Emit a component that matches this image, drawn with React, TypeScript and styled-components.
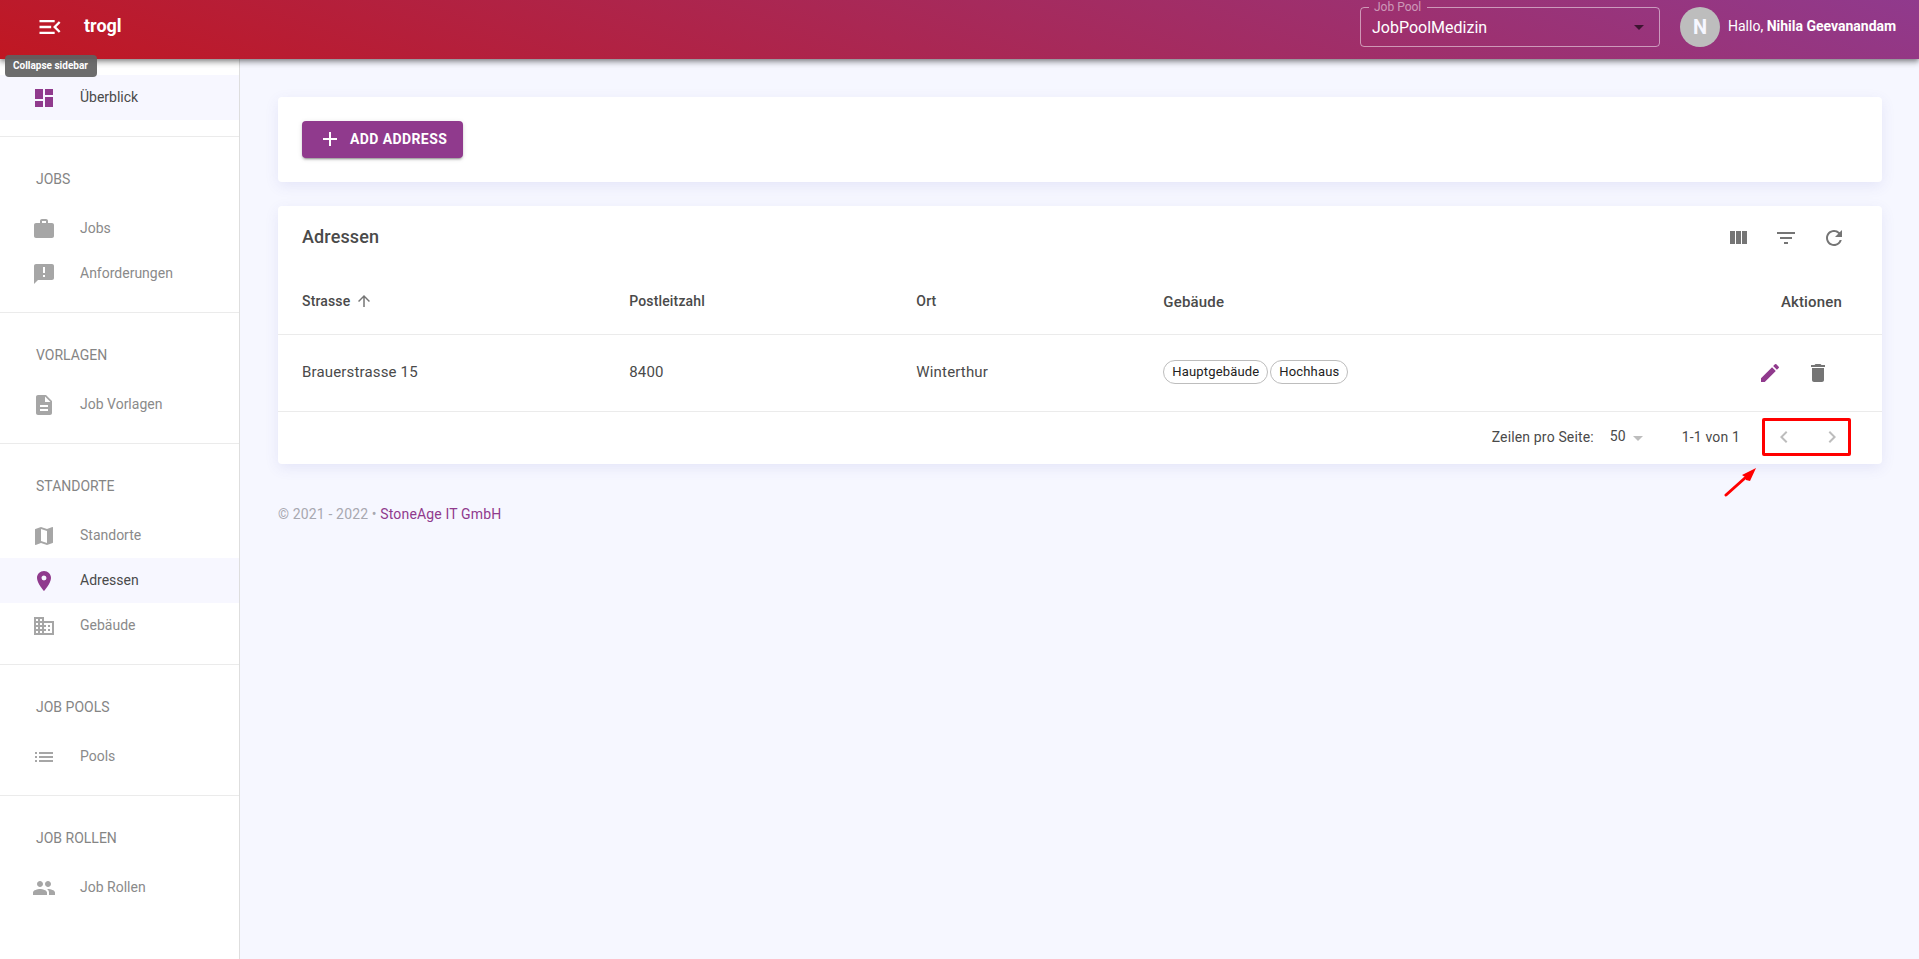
import React from "react";
import styled, { createGlobalStyle } from "styled-components";
import type { IconType } from "react-icons";
import {
  MdAdd,
  MdAnnouncement,
  MdArrowDropDown,
  MdArrowUpward,
  MdBusiness,
  MdChevronLeft,
  MdChevronRight,
  MdDashboard,
  MdDelete,
  MdDescription,
  MdEdit,
  MdFilterList,
  MdList,
  MdMap,
  MdMenuOpen,
  MdPeople,
  MdPlace,
  MdRefresh,
  MdWork,
} from "react-icons/md";

const purple = "#903a8d";
const line = "#ebebeb";
const ink = "#4a4a4a";

const GlobalStyle = createGlobalStyle`
  *, *::before, *::after { box-sizing: border-box; }
  body {
    margin: 0;
    background: #f6f7ff;
    color: ${ink};
    font-family: Roboto, "Liberation Sans", sans-serif;
    font-size: 14px;
    line-height: 20px;
  }
  button, select { font: inherit; }
  a { text-decoration: none; }
`;

const Page = styled.div`
  min-height: 100vh;
  display: flex;
  flex-direction: column;
`;

const Header = styled.header`
  position: relative;
  z-index: 2;
  height: 59px;
  padding: 0 19px 5px 36px;
  display: flex;
  align-items: center;
  color: #fff;
  background: linear-gradient(20deg, #c01722 0%, ${purple} 100%);
  box-shadow: 0 2px 4px -1px rgba(0, 0, 0, 0.3), 0 4px 5px rgba(0, 0, 0, 0.2),
    0 1px 10px rgba(0, 0, 0, 0.14);
`;

const MenuButton = styled.button`
  position: relative;
  display: flex;
  padding: 0;
  margin-right: 20px;
  border: 0;
  background: none;
  color: inherit;
`;

const Tooltip = styled.span`
  position: absolute;
  top: 42px;
  left: -31px;
  padding: 0 9px 0 8px;
  border-radius: 4px;
  background: rgba(97, 97, 97, 0.92);
  color: #fff;
  font-size: 10px;
  font-weight: 700;
  line-height: 22px;
  white-space: nowrap;
`;

const Brand = styled.strong`
  flex: 1;
  font-size: 18px;
  font-weight: 700;
  padding-bottom: 2px;
`;

const PoolField = styled.fieldset`
  position: relative;
  align-self: flex-start;
  width: 300px;
  height: 47px;
  margin: 0 20px 0 0;
  padding: 0;
  border: 1px solid rgba(255, 255, 255, 0.5);
  border-radius: 4px;
  legend {
    margin-left: 8px;
    padding: 0 6px 0 5px;
    color: rgba(255, 255, 255, 0.5);
    font-size: 12px;
    line-height: 14px;
  }
  select {
    display: block;
    width: 100%;
    height: 28px;
    padding: 0 11px;
    border: 0;
    appearance: none;
    background: none;
    color: #fff;
    font-size: 16px;
  }
  svg {
    position: absolute;
    right: 8px;
    bottom: 7px;
    color: rgba(0, 0, 0, 0.6);
    pointer-events: none;
  }
`;

const Avatar = styled.span`
  display: grid;
  place-items: center;
  width: 40px;
  height: 40px;
  margin-right: 8px;
  border-radius: 50%;
  background: #bdbdbd;
  color: #f6f7ff;
  font-size: 20px;
  font-weight: 700;
`;

const Greeting = styled.span`
  min-width: 172px;
  padding-bottom: 2px;
`;

const Body = styled.div`
  flex: 1;
  display: flex;
`;

const Sidebar = styled.nav`
  flex: 0 0 240px;
  background: #fff;
  border-right: 1px solid #dedede;
`;

const Section = styled.section`
  padding: 16px 0;
  & + & {
    border-top: 1px solid ${line};
  }
`;

const SectionTitle = styled.h2`
  margin: 0;
  padding: 0 36px;
  color: #858585;
  font-size: 14px;
  font-weight: 400;
  line-height: 53px;
`;

const NavLink = styled.a<{ $active?: boolean }>`
  display: flex;
  align-items: center;
  gap: 24px;
  height: 45px;
  padding: 0 32px;
  color: ${(p) => (p.$active ? ink : "#8a8a8a")};
  background: ${(p) => (p.$active ? "#f7f7ff" : "transparent")};
  svg {
    color: ${(p) => (p.$active ? purple : "#a6a6a6")};
  }
  span {
    padding-bottom: 1px;
  }
`;

const Main = styled.main`
  flex: 1;
  min-width: 0;
  padding: 38px 37px 38px 38px;
`;

const Card = styled.section`
  margin-bottom: 24px;
  border-radius: 4px;
  background: #fff;
  box-shadow: 0 4px 14px rgba(80, 80, 190, 0.1);
`;

const ActionCard = styled(Card)`
  padding: 24px;
`;

const AddButton = styled.button`
  display: flex;
  align-items: center;
  gap: 8px;
  height: 37px;
  padding: 0 16px 2px;
  border: 0;
  border-radius: 4px;
  background: ${purple};
  color: #fff;
  font-size: 14px;
  font-weight: 700;
  letter-spacing: 0.02857em;
  text-transform: uppercase;
  box-shadow: 0 3px 1px -2px rgba(0, 0, 0, 0.2), 0 2px 2px rgba(0, 0, 0, 0.14),
    0 1px 5px rgba(0, 0, 0, 0.12);
`;

const Toolbar = styled.div`
  display: flex;
  align-items: center;
  height: 64px;
  padding: 0 24px;
  h1 {
    flex: 1;
    margin: 0;
    padding-bottom: 2px;
    font-size: 18px;
    font-weight: 500;
    letter-spacing: 0.0075em;
  }
`;

const IconButton = styled.button<{ $tone?: string }>`
  display: inline-grid;
  place-items: center;
  width: 48px;
  height: 48px;
  padding: 0;
  border: 0;
  background: none;
  color: ${(p) => p.$tone || "#757575"};
`;

const Table = styled.table`
  width: 100%;
  table-layout: fixed;
  border-collapse: separate;
  border-spacing: 0;
  th,
  td {
    padding: 0 16px;
    border-bottom: 1px solid ${line};
    text-align: left;
  }
  th {
    height: 65px;
    font-size: 15px;
    font-weight: 500;
    letter-spacing: 0.01071em;
  }
  th:nth-child(-n + 3) {
    padding-bottom: 2px;
    font-size: 14px;
  }
  td {
    height: 77px;
    font-size: 15px;
    letter-spacing: 0.01071em;
  }
  td:nth-child(-n + 4) {
    padding-bottom: 2px;
  }
  th:first-child,
  td:first-child {
    padding-left: 24px;
  }
  th:last-child,
  td:last-child {
    padding-right: 40px;
    text-align: right;
  }
`;

const SortLabel = styled.button`
  display: inline-flex;
  align-items: center;
  gap: 5px;
  padding: 0;
  border: 0;
  background: none;
  color: inherit;
  letter-spacing: inherit;
  svg {
    color: #757575;
  }
`;

const Chips = styled.div`
  display: flex;
  gap: 2px;
`;

const Chip = styled.span`
  padding: 0 8px;
  border: 1px solid #bdbdbd;
  border-radius: 12px;
  color: #212121;
  font-size: 13px;
  line-height: 22px;
`;

const Pagination = styled.div`
  display: flex;
  align-items: center;
  justify-content: flex-end;
  height: 52px;
  padding: 0 26px 2px 24px;
`;

const PageSize = styled.label`
  position: relative;
  display: flex;
  align-items: center;
  margin-right: 32px;
  letter-spacing: 0.01071em;
  select {
    width: 40px;
    margin-left: 16px;
    padding: 0 0 2px;
    border: 0;
    appearance: none;
    background: none;
    color: inherit;
  }
  svg {
    position: absolute;
    right: 0;
    top: 0;
    color: #bdbdbd;
    pointer-events: none;
  }
`;

const Range = styled.span`
  margin-right: 20px;
  letter-spacing: 0.01071em;
`;

const Pager = styled.div`
  position: relative;
  display: flex;
`;

const Highlight = styled.div`
  position: absolute;
  top: 5px;
  left: 2px;
  width: 89px;
  height: 38px;
  border: 3px solid #f00;
  border-radius: 2px;
  pointer-events: none;
`;

const Pointer = styled.svg`
  position: absolute;
  top: 54px;
  left: -36px;
`;

const Footer = styled.footer`
  padding-top: 16px;
  color: #a8a8b0;
  letter-spacing: 0.01071em;
  a {
    color: ${purple};
  }
`;

interface NavEntry {
  label: string;
  icon: IconType;
  active?: boolean;
}

const sections: { title?: string; items: NavEntry[] }[] = [
  { items: [{ label: "Überblick", icon: MdDashboard, active: true }] },
  {
    title: "JOBS",
    items: [
      { label: "Jobs", icon: MdWork },
      { label: "Anforderungen", icon: MdAnnouncement },
    ],
  },
  { title: "VORLAGEN", items: [{ label: "Job Vorlagen", icon: MdDescription }] },
  {
    title: "STANDORTE",
    items: [
      { label: "Standorte", icon: MdMap },
      { label: "Adressen", icon: MdPlace, active: true },
      { label: "Gebäude", icon: MdBusiness },
    ],
  },
  { title: "JOB POOLS", items: [{ label: "Pools", icon: MdList }] },
  { title: "JOB ROLLEN", items: [{ label: "Job Rollen", icon: MdPeople }] },
];

const addresses = [
  {
    street: "Brauerstrasse 15",
    zip: "8400",
    city: "Winterthur",
    buildings: ["Hauptgebäude", "Hochhaus"],
  },
];

export default function App() {
  return (
    <Page>
      <GlobalStyle />
      <Header>
        <MenuButton type="button" aria-describedby="menu-tip" aria-label="Menu">
          <MdMenuOpen size={28} />
          <Tooltip id="menu-tip" role="tooltip">
            Collapse sidebar
          </Tooltip>
        </MenuButton>
        <Brand>trogl</Brand>
        <PoolField>
          <legend>
            <label htmlFor="pool">Job Pool</label>
          </legend>
          <select id="pool" defaultValue="JobPoolMedizin">
            <option>JobPoolMedizin</option>
          </select>
          <MdArrowDropDown size={24} />
        </PoolField>
        <Avatar>N</Avatar>
        <Greeting>
          Hallo, <b>Nihila Geevanandam</b>
        </Greeting>
      </Header>
      <Body>
        <Sidebar>
          {sections.map((section, i) => (
            <Section key={i}>
              {section.title && <SectionTitle>{section.title}</SectionTitle>}
              {section.items.map(({ label, icon: Icon, active }) => (
                <NavLink key={label} href="#" $active={active}>
                  <Icon size={24} />
                  <span>{label}</span>
                </NavLink>
              ))}
            </Section>
          ))}
        </Sidebar>
        <Main>
          <ActionCard>
            <AddButton type="button">
              <MdAdd size={24} />
              Add Address
            </AddButton>
          </ActionCard>
          <Card>
            <Toolbar>
              <h1>Adressen</h1>
              <IconButton type="button" aria-label="Spalten">
                <svg width="24" height="24" viewBox="0 0 24 24" fill="currentColor">
                  <path d="M10 18h5V5h-5v13zm-6 0h5V5H4v13zM16 5v13h5V5h-5z" />
                </svg>
              </IconButton>
              <IconButton type="button" aria-label="Filter">
                <MdFilterList size={24} />
              </IconButton>
              <IconButton type="button" aria-label="Aktualisieren">
                <MdRefresh size={24} />
              </IconButton>
            </Toolbar>
            <Table>
              <colgroup>
                <col width="20.9%" />
                <col width="17.9%" />
                <col width="15.4%" />
                <col />
                <col width="16%" />
              </colgroup>
              <thead>
                <tr>
                  <th aria-sort="ascending">
                    <SortLabel type="button">
                      Strasse
                      <MdArrowUpward size={18} />
                    </SortLabel>
                  </th>
                  <th>Postleitzahl</th>
                  <th>Ort</th>
                  <th>Gebäude</th>
                  <th>Aktionen</th>
                </tr>
              </thead>
              <tbody>
                {addresses.map((a) => (
                  <tr key={a.street}>
                    <td>{a.street}</td>
                    <td>{a.zip}</td>
                    <td>{a.city}</td>
                    <td>
                      <Chips>
                        {a.buildings.map((b) => (
                          <Chip key={b}>{b}</Chip>
                        ))}
                      </Chips>
                    </td>
                    <td>
                      <IconButton type="button" aria-label="Bearbeiten" $tone={purple}>
                        <MdEdit size={24} />
                      </IconButton>
                      <IconButton type="button" aria-label="Löschen">
                        <MdDelete size={24} />
                      </IconButton>
                    </td>
                  </tr>
                ))}
              </tbody>
            </Table>
            <Pagination>
              <PageSize>
                Zeilen pro Seite:
                <select defaultValue="50">
                  <option>50</option>
                </select>
                <MdArrowDropDown size={24} />
              </PageSize>
              <Range>1-1 von 1</Range>
              <Pager>
                <IconButton type="button" aria-label="Vorherige Seite" $tone="#bdbdbd">
                  <MdChevronLeft size={24} />
                </IconButton>
                <IconButton type="button" aria-label="Nächste Seite" $tone="#bdbdbd">
                  <MdChevronRight size={24} />
                </IconButton>
                <Highlight />
                <Pointer width="34" height="30" viewBox="0 0 34 30" fill="#f00">
                  <path d="M2 28L21 11" stroke="#f00" strokeWidth="3" strokeLinecap="round" />
                  <path d="M32 1L18 8l3 2 1 3 4 1z" />
                </Pointer>
              </Pager>
            </Pagination>
          </Card>
          <Footer>
            © 2021 - 2022 • <a href="#">StoneAge IT GmbH</a>
          </Footer>
        </Main>
      </Body>
    </Page>
  );
}
